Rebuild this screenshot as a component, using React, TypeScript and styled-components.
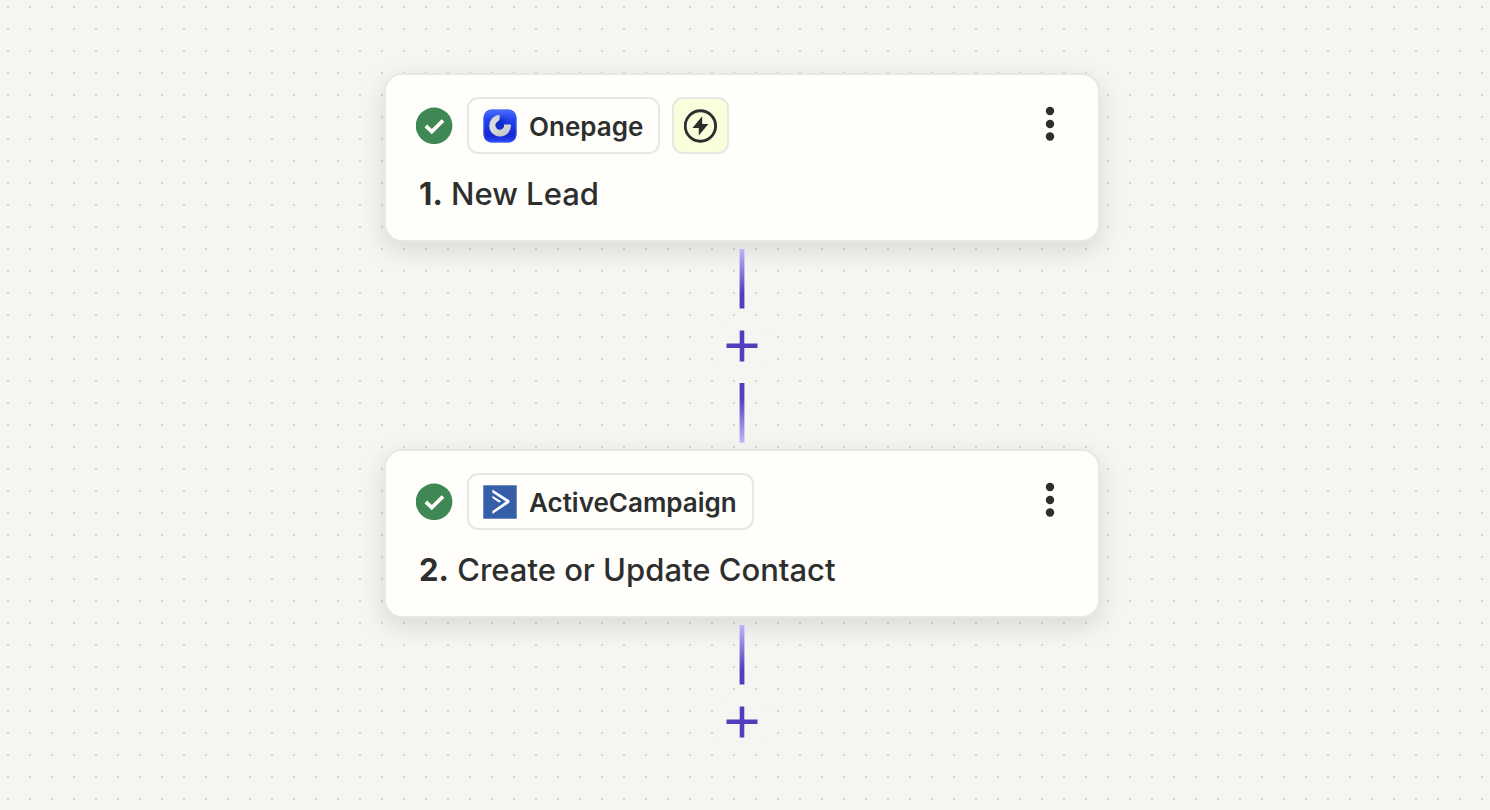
import React from "react";
import styled, { createGlobalStyle } from "styled-components";

const GlobalStyle = createGlobalStyle`
  *, *::before, *::after { box-sizing: border-box; }
  html { min-height: 100%; background-color: #f6f5f2; }
  body {
    margin: 0;
    color: #2d2e2e;
    font-family: Inter, "Liberation Sans", sans-serif;
  }
`;

const Canvas = styled.main`
  display: flex;
  flex-direction: column;
  align-items: center;
  min-height: 100vh;
  padding: 73px 22px 16px 16px;
  background-color: #f6f5f2;
  background-image: radial-gradient(circle at 1px 1px, #d6d4d0 1.2px, transparent 1.2px);
  background-size: 22px 22px;
  background-position: 7px 6px;
`;

const StepCard = styled.section`
  width: 100%;
  max-width: 716px;
  padding: 22px 32px 26px 30px;
  border: 2px solid #e8e7e4;
  border-radius: 18px;
  background: #fffefa;
  box-shadow: 0 8px 24px rgba(45, 46, 46, 0.14);
`;

const CardHeader = styled.header`
  display: flex;
  align-items: center;
`;

const StatusIcon = styled.svg`
  flex: none;
  width: 37px;
  height: 37px;
  margin-right: 14px;
`;

const AppChip = styled.div`
  display: flex;
  align-items: center;
  gap: 12px;
  height: 57px;
  padding: 0 15px 0 14px;
  border: 2px solid #e8e7e4;
  border-radius: 11px;
`;

const AppName = styled.span`
  padding-top: 2px;
  font-size: 26px;
  font-weight: 600;
  line-height: 32px;
  white-space: nowrap;
`;

const AppLogo = styled.svg`
  flex: none;
  width: 34px;
  height: 34px;
`;

const TriggerBadge = styled.div`
  display: flex;
  align-items: center;
  justify-content: center;
  width: 57px;
  height: 57px;
  margin-left: 12px;
  border: 2px solid #e8e7e4;
  border-radius: 11px;
  background: #f7ffdd;
`;

const IconButton = styled.button`
  display: flex;
  align-items: center;
  justify-content: center;
  padding: 0;
  border: 0;
  background: transparent;
  color: inherit;
  cursor: pointer;
`;

const MenuButton = styled(IconButton)`
  width: 32px;
  height: 48px;
  margin-left: auto;
  margin-bottom: 4px;
`;

const StepTitle = styled.h2`
  margin: 20px 0 0;
  padding-left: 3px;
  font-size: 31px;
  font-weight: 500;
  line-height: 40px;
`;

const StepNumber = styled.span`
  font-weight: 700;
`;

const ConnectorColumn = styled.div`
  display: flex;
  flex-direction: column;
  align-items: center;
  gap: 7px;
  padding: 7px 0 6px;
`;

const AddButton = styled(IconButton)`
  width: 60px;
  height: 60px;
  border-radius: 50%;
  background: #f6f5f2;
  color: #503ebd;
`;

const CheckMark = () => (
  <StatusIcon viewBox="0 0 37 37" role="img" aria-label="Step complete">
    <circle cx="18.1" cy="18.8" r="18.3" fill="#3f8856" />
    <path d="M9.8 18.8 L15.8 24.6 L27 13.5" fill="none" stroke="#fffefa" strokeWidth="3.7" />
  </StatusIcon>
);

const OnepageLogo = () => (
  <AppLogo viewBox="0 0 34 34" aria-hidden="true">
    <defs>
      <linearGradient id="onepage-tile" x1="0" y1="0" x2="0" y2="1">
        <stop offset="0" stopColor="#4a70fb" />
        <stop offset="0.3" stopColor="#2345ee" />
        <stop offset="0.8" stopColor="#1429d4" />
        <stop offset="1" stopColor="#2c4bf5" />
      </linearGradient>
      <linearGradient id="onepage-ring" x1="0" y1="0" x2="0.4" y2="1">
        <stop offset="0" stopColor="#d0d0d4" />
        <stop offset="0.5" stopColor="#dedede" />
        <stop offset="1" stopColor="#c8c8ca" />
      </linearGradient>
      <radialGradient id="onepage-shade" cx="0.4" cy="0.6" r="0.6">
        <stop offset="0" stopColor="#0d22b4" stopOpacity="0.8" />
        <stop offset="1" stopColor="#0d22b4" stopOpacity="0" />
      </radialGradient>
    </defs>
    <rect x="0.5" y="0.5" width="33" height="33" rx="8" fill="url(#onepage-tile)" />
    <rect x="1" y="1" width="32" height="32" rx="7.5" fill="none" stroke="#3c60fa" strokeOpacity="0.7" />
    <circle cx="18.5" cy="13.5" r="8" fill="url(#onepage-shade)" />
    <path
      d="M16.6 6 A10.8 10.8 0 1 0 27.8 15.4 H20.9 A4.3 4.3 0 1 1 14.8 12.6 Q16.6 11.6 16.6 9.6 Z"
      fill="url(#onepage-ring)"
    />
  </AppLogo>
);

const ActiveCampaignLogo = () => (
  <AppLogo viewBox="0 0 34 34" aria-hidden="true">
    <rect x="0.3" y="0.3" width="33.4" height="33.4" fill="#365faa" />
    <path
      d="M9.4 4.6 L25.9 15.1 Q27.2 16.5 25.9 17.9 L9.4 29.1 V26.1 L22.9 16.5 L9.4 7.5 Z"
      fill="#fff"
    />
    <path d="M9.4 10.8 L18 16.3 Q17 17.8 15.2 16.9 L9.4 13.1 Z" fill="#fff" />
  </AppLogo>
);

const BoltIcon = () => (
  <svg width="34" height="34" viewBox="0.6 0 34 34" role="img" aria-label="Instant trigger">
    <circle cx="17" cy="17" r="15.2" fill="none" stroke="#2d2e2e" strokeWidth="2.9" />
    <path d="M18.8 7.2 L9 18.9 H15.4 V26.6 L25 15 H18.8 Z" fill="#2d2e2e" />
  </svg>
);

const MoreIcon = () => (
  <svg width="10" height="36" viewBox="0 0 10 36" fill="currentColor" aria-hidden="true">
    <circle cx="5" cy="5" r="4.2" />
    <circle cx="5" cy="18" r="4.2" />
    <circle cx="5" cy="30.5" r="4.2" />
  </svg>
);

const PlusIcon = () => (
  <svg width="32" height="32" viewBox="0 0 32 32" aria-hidden="true">
    <path d="M16 0.4 V31.4 M0.5 15.8 H31.5" stroke="currentColor" strokeWidth="4.6" />
  </svg>
);

const ConnectorLine = ({ id, rising = false }: { id: string; rising?: boolean }) => (
  <svg width="6" height="60" viewBox="0 0 6 60" aria-hidden="true">
    <defs>
      <linearGradient id={id} x1="0" x2="0" y1={rising ? 1 : 0} y2={rising ? 0 : 1}>
        <stop offset="0" stopColor="#c0b6f8" />
        <stop offset="0.75" stopColor="#503ebd" />
      </linearGradient>
    </defs>
    <rect x="0.6" y="0" width="4.8" height="59.5" fill={`url(#${id})`} />
  </svg>
);

type StepProps = {
  number: number;
  title: string;
  app: string;
  logo: React.ReactNode;
  instant?: boolean;
};

const Step = ({ number, title, app, logo, instant }: StepProps) => (
  <StepCard>
    <CardHeader>
      <CheckMark />
      <AppChip>
        {logo}
        <AppName>{app}</AppName>
      </AppChip>
      {instant && (
        <TriggerBadge>
          <BoltIcon />
        </TriggerBadge>
      )}
      <MenuButton type="button" aria-label={`${title} options`}>
        <MoreIcon />
      </MenuButton>
    </CardHeader>
    <StepTitle>
      <StepNumber>{number}.</StepNumber> {title}
    </StepTitle>
  </StepCard>
);

const Connector = ({ id, last = false }: { id: string; last?: boolean }) => (
  <ConnectorColumn>
    <ConnectorLine id={`${id}-top`} />
    <AddButton type="button" aria-label="Add a step">
      <PlusIcon />
    </AddButton>
    {!last && <ConnectorLine id={`${id}-bottom`} rising />}
  </ConnectorColumn>
);

export default function App() {
  return (
    <>
      <GlobalStyle />
      <Canvas>
        <Step number={1} title="New Lead" app="Onepage" logo={<OnepageLogo />} instant />
        <Connector id="first" />
        <Step
          number={2}
          title="Create or Update Contact"
          app="ActiveCampaign"
          logo={<ActiveCampaignLogo />}
        />
        <Connector id="second" last />
      </Canvas>
    </>
  );
}
